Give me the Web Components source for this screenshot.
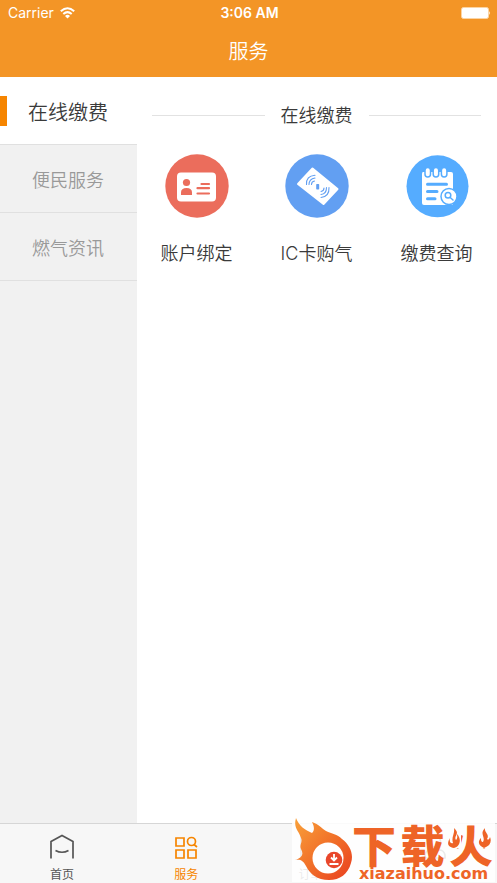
<!DOCTYPE html>
<html lang="zh-CN">
<head>
<meta charset="utf-8">
<meta name="viewport" content="width=device-width, initial-scale=1">
<title>服务</title>
<style>
html, body { height: 100%; margin: 0; }
body { background: #fff; color: #444; font-family: Inter, "Noto Sans CJK SC", sans-serif; }
</style>
</head>
<body>
<service-app></service-app>

<script>
const define = (name, html) => customElements.define(name, class extends HTMLElement {
  constructor() {
    super();
    this.attachShadow({ mode: 'open' }).innerHTML = html;
  }
});

define('status-bar', `
<style>
:host { display: grid; grid-template-columns: 1fr auto 1fr; align-items: center; height: 26px; padding: 0 6px 0 8px; font-size: 14px; line-height: 20px; color: #fff; }
.carrier { display: flex; align-items: center; gap: 6px; }
.time { font-weight: 600; }
.battery { justify-self: end; display: block; }
</style>
<span class="carrier">Carrier
<svg width="15" height="12" viewBox="0 0 15 12" fill="none" stroke="#fff" stroke-width="2"><path d="M.8 4.3Q7.5-1.8 14.2 4.3M3.3 7Q7.5 3.2 11.7 7"/><path d="M5 8.9Q7.5 6.8 10 8.9L7.5 11.4Z" fill="#fff" stroke="none"/></svg></span>
<span class="time">3:06 AM</span>
<svg class="battery" width="30" height="12" viewBox="0 0 30 12"><rect x=".5" y=".5" width="27" height="11" rx="2" fill="#fff" stroke="#fbd4a4"/><path d="M28.3 4q1.7 2 0 4z" fill="#fff"/></svg>
`);

define('nav-bar', `
<style>
:host { display: block; background: #f39526; color: #fff; }
h1 { margin: 0; height: 51px; font-size: 20px; line-height: 52px; font-weight: 350; text-align: center; }
</style>
<status-bar></status-bar>
<h1><slot></slot></h1>
`);

define('category-item', `
<style>
:host { display: block; }
button { display: flex; align-items: center; justify-content: center; position: relative; box-sizing: border-box; width: 100%; height: 68px; padding: 4px 1px 0 0; border: 0; border-bottom: 1px solid #e0e0e0; background: #f1f1f1; color: #999; font: inherit; font-weight: 350; font-size: 18px; line-height: 28px; cursor: pointer; }
:host([active]) button { background: #fff; color: #3a3a3a; font-size: 20px; }
:host([active]) button::before { content: ""; position: absolute; left: 0; top: 19px; width: 7px; height: 30px; background: #f68500; }
</style>
<button type="button"><slot></slot></button>
`);

define('section-title', `
<style>
:host { display: flex; align-items: center; gap: 16px; padding: 0 16px 0 15px; height: 77px; }
:host::before, :host::after { content: ""; flex: 1; height: 1px; background: #e2e2e2; }
h2 { margin: 0; font-size: 18px; line-height: 28px; font-weight: 350; color: #3a3a3a; }
</style>
<h2><slot></slot></h2>
`);

define('service-item', `
<style>
:host { display: block; }
button { display: flex; flex-direction: column; align-items: center; gap: 22px; width: 100%; padding: 0 1px 0 0; border: 0; background: none; color: #3a3a3a; font: inherit; font-weight: 350; font-size: 18px; line-height: 28px; white-space: nowrap; cursor: pointer; }
::slotted(svg) { display: block; width: 64px; height: 64px; }
</style>
<button type="button"><slot name="icon"></slot><span><slot></slot></span></button>
`);

define('tab-item', `
<style>
:host { display: block; flex: 1; }
a { display: flex; flex-direction: column; align-items: center; gap: 6px; padding-top: 10px; color: #555; font-size: 12px; line-height: 18px; text-decoration: none; }
:host([active]) a { color: #f68500; }
::slotted(svg) { display: block; width: 26px; height: 26px; fill: none; stroke: currentColor; stroke-width: 1.7; }
</style>
<a href="#"><slot name="icon"></slot><span><slot></slot></span></a>
`);

define('site-mark', `
<style>
:host { display: flex; box-sizing: border-box; width: 203px; height: 64px; padding-left: 2px; background: rgba(255,255,255,.88); color: #ee6427; }
.flame { display: block; flex: none; width: 58px; height: 64px; }
.words { flex: 1; display: flex; flex-direction: column; padding-top: 7px; }
.name { position: relative; display: flex; justify-content: space-between; padding: 0 2px 3px 0; font: 900 44px/38px "Noto Sans CJK SC", sans-serif; }
.sparks { position: absolute; left: 95px; top: 3px; width: 44px; height: 24px; }
.site { padding-left: 7px; font: bold 16px/16px "DejaVu Sans", sans-serif; }
</style>
<svg class="flame" viewBox="0 0 58 64">
<defs><linearGradient id="g" x1="0" y1="0" x2="1" y2="1"><stop stop-color="#f9a13a"/><stop offset=".5" stop-color="#f17129"/><stop offset="1" stop-color="#e93f20"/></linearGradient></defs>
<path fill="url(#g)" d="M2 0C5 8 11 12 18 15C21 12 20 8 18 4C25 6 28 11 32 13C38 16 43 16 48 21C56 27 60 36 57 45C54 56 46 62 35 62C23 62 16 56 12 48C9 42 6 41 1 42C8 40 10 36 7 31C5 27 9 24 7 20C5 13-1 10 2 0Z"/>
<circle cx="34" cy="40" r="15.500" fill="#fff"/><circle cx="40" cy="42" r="8.300" fill="#e9472b"/>
<path d="M40 36v6M37 39.500l3 3 3-3M35.500 46h9" fill="none" stroke="#fff" stroke-width="1.800"/>
</svg>
<div class="words"><div class="name"><span>下</span><span>载</span><span>火</span>
<svg class="sparks" viewBox="0 0 44 24"><path fill="#fefefe" d="M0 3H14V20H0ZM31 3H44V20H31Z"/><path fill="#ee6427" d="M7 0C14 6 6 8 9 12C11 10 10 8 10 6C15 11 13 19 7 20C0 19 0 15 3 10C2 14 4 16 6 15C4 9 8 6 7 0ZM38 0C32 6 39 9 36 14C34 14 34 12 34 10C30 14 32 18 37 20C43 18 45 14 43 9C42 12 41 12 40 11C43 6 37 5 38 0Z"/></svg>
</div><div class="site">xiazaihuo.com</div></div>
`);

define('service-app', `
<style>
:host { display: flex; flex-direction: column; min-height: 100%; position: relative; }
.body { flex: 1; display: grid; grid-template-columns: 137fr 360fr; }
nav { background: #f1f1f1; }
.services { display: grid; grid-template-columns: repeat(3, 1fr); }
footer { display: flex; height: 59px; border-top: 1px solid #d6d6d6; background: #f7f7f7; }
site-mark { position: absolute; right: 2px; bottom: 1px; }
</style>
<nav-bar>服务</nav-bar>
<div class="body">
<nav>
<category-item active>在线缴费</category-item>
<category-item>便民服务</category-item>
<category-item>燃气资讯</category-item>
</nav>
<main>
<section-title>在线缴费</section-title>
<div class="services">
<service-item><svg slot="icon" viewBox="0 0 64 64"><circle cx="32" cy="32" r="31.7" fill="#eb6d5c"/><rect x="12" y="18.500" width="39" height="29" rx="4" fill="#fff"/><g fill="#eb6d5c"><circle cx="21.500" cy="28.500" r="3.600"/><path d="M16 41v-2.500q0-4.500 5.500-4.500t5.500 4.500V41z"/></g><path d="M36.500 30H44M32.500 34.200H44M32.500 39.500H44" stroke="#eb6d5c" stroke-width="2.200" stroke-linecap="round"/></svg>账户绑定</service-item>
<service-item><svg slot="icon" viewBox="0 0 64 64"><circle cx="32" cy="32" r="31.700" fill="#629ff2"/><path d="M27.500 14.500L52.500 35 38.500 50 13 30Z" fill="#fff" stroke="#fff" stroke-width="2" stroke-linejoin="round"/><rect x="31.200" y="30" width="3" height="5.500" rx=".7" fill="#629ff2"/><g fill="none" stroke="#629ff2" stroke-width="1.100" stroke-linecap="round"><path d="M21.500 30.500Q21 22 30 21.300M24 30.500Q24 25 30 24M26.500 30.500Q26.500 27.500 29.500 27M44 33.500Q44.500 42.500 36 43.500M41.500 33.500Q41.500 40 36 40.500M39 34Q39 37 36 37.500"/></g></svg>IC卡购气</service-item>
<service-item><svg slot="icon" viewBox="0 0 64 64"><circle cx="32.500" cy="32.300" r="31" fill="#55acff"/><path d="M18 18H46Q48 18 48 20V51H19Q17 51 17 49V20Q17 18 18 18Z" fill="#fff"/><g fill="#fff" stroke="#55acff" stroke-width="1.500"><rect x="20" y="13.500" width="5.500" height="9.500" rx="2.700"/><rect x="28.200" y="13.500" width="5.500" height="9.500" rx="2.700"/><rect x="36.400" y="13.500" width="5.500" height="9.500" rx="2.700"/></g><path d="M22.500 30.300H41.500M22.500 37.500H32M22.500 44.700H30" stroke="#55acff" stroke-width="3" stroke-linecap="round"/><circle cx="44" cy="42.500" r="8" fill="#fff" stroke="#55acff" stroke-width="1.500"/><g fill="none" stroke="#55acff" stroke-width="1.500" stroke-linecap="round"><circle cx="43" cy="41.300" r="2.800"/><path d="M45.200 43.500L48 46"/></g></svg>缴费查询</service-item>
</div>
</main>
</div>
<footer>
<tab-item><svg slot="icon" viewBox="0 0 26 26"><path d="M2 24.500V7.500L13 1.500 24 7.500V24.500M6.500 16.500Q13 20 19.500 16.500"/></svg>首页</tab-item>
<tab-item active><svg slot="icon" viewBox="0 0 26 26"><path d="M3 4h8v8H3zM3 16h8v8H3zM15 16h8v8h-8zM21 10.500l3 2.500"/><circle cx="18.500" cy="7.500" r="4"/></svg>服务</tab-item>
<tab-item><svg slot="icon" viewBox="0 0 26 26"><path d="M3 2h20v16l-6 6H3zM8 8h10M8 13h10"/></svg>订单</tab-item>
<tab-item aria-label="个人中心"><svg slot="icon" viewBox="0 0 26 26"><circle cx="13" cy="7.500" r="5.500"/><path d="M3 24v-3q1-5 6-5h8q5 0 6 5v3z"/></svg></tab-item>
</footer>
<site-mark></site-mark>
`);
</script>
</body>
</html>
